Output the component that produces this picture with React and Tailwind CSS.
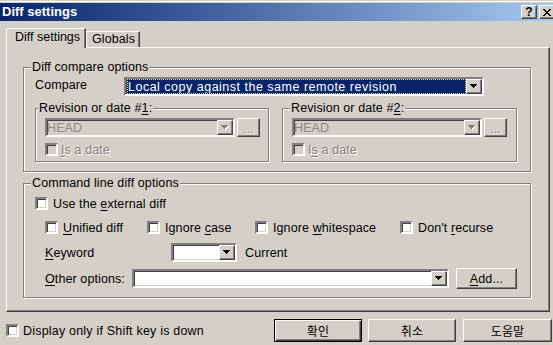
import React from "react";

const sunken =
  "border-2 border-t-[#808080] border-l-[#808080] border-b-white border-r-white shadow-[inset_1px_1px_0_#404040,inset_-1px_-1px_0_#d4d0c8]";
const raised =
  "border border-t-white border-l-white border-r-[#404040] border-b-[#404040] shadow-[inset_-1px_-1px_0_#808080]";
const disabledText = "text-[#808080] [text-shadow:1px_1px_0_#ffffff]";

function U({ children }) {
  return <span className="underline decoration-1 underline-offset-[2px]">{children}</span>;
}

function Arrow({ disabled }) {
  const c = disabled ? "#808080" : "#000000";
  const rows = [0, 1, 2, 3];
  return (
    <svg width="8" height="5" viewBox="0 0 8 5" className="block">
      {disabled &&
        rows.map((i) => (
          <rect key={"s" + i} x={i + 1} y={i + 1} width={7 - 2 * i} height="1" fill="#ffffff" />
        ))}
      {rows.map((i) => (
        <rect key={i} x={i} y={i} width={7 - 2 * i} height="1" fill={c} />
      ))}
    </svg>
  );
}

function XGlyph() {
  const rows = ["11000011", "01100110", "00111100", "00011000", "00111100", "01100110", "11000011"];
  const rects = [];
  rows.forEach((r, y) =>
    r.split("").forEach((ch, x) => {
      if (ch === "1") rects.push(<rect key={x + "-" + y} x={x} y={y} width="1" height="1" fill="#000" />);
    })
  );
  return (
    <svg width="8" height="7" viewBox="0 0 8 7" className="block">
      {rects}
    </svg>
  );
}

function CapBtn({ children }) {
  return (
    <div className={`${raised} bg-[#d4d0c8] w-[16px] h-[14px] flex items-center justify-center`}>{children}</div>
  );
}

function Combo({ className, disabled, children }) {
  return (
    <div className={`${sunken} ${disabled ? "bg-[#d4d0c8]" : "bg-white"} flex ${className}`}>
      <div className="flex-1 min-w-0 flex items-center h-full">{children}</div>
      <div className={`${raised} bg-[#d4d0c8] w-[16px] h-full flex items-center justify-center shrink-0`}>
        <Arrow disabled={disabled} />
      </div>
    </div>
  );
}

function Check({ disabled }) {
  return <div className={`${sunken} w-[13px] h-[13px] shrink-0 ${disabled ? "bg-[#d4d0c8]" : "bg-white"}`} />;
}

function Group({ label, legendClass, className, children }) {
  return (
    <div className={`relative border border-[#808080] shadow-[inset_1px_1px_0_#ffffff,1px_1px_0_#ffffff] ${className}`}>
      <div className={`absolute -top-[8px] ${legendClass} bg-[#d4d0c8] px-[1px] leading-[14px] whitespace-nowrap`}>
        {label}
      </div>
      {children}
    </div>
  );
}

function RevGroup({ label, legendClass, className, second }) {
  return (
    <Group label={label} legendClass={legendClass} className={`h-[54px] pt-[9px] pl-[9px] ${className}`}>
      <div className="flex gap-[2px]">
        <Combo className="w-[190px] h-[19px]" disabled>
          <span className="text-[#8a8a8a] leading-[14px]">HEAD</span>
        </Combo>
        <div className={`${raised} bg-[#d4d0c8] w-[23px] h-[19px] flex items-end justify-center pb-[3px]`}>
          <span className={`${disabledText} text-[11px] leading-[8px]`}>...</span>
        </div>
      </div>
      <div className="mt-[6px] flex items-center gap-[3px] h-[13px]">
        <Check disabled />
        <span className={disabledText}>
          {second ? (
            <>
              I<U>s</U> a date
            </>
          ) : (
            <>
              <U>I</U>s a date
            </>
          )}
        </span>
      </div>
    </Group>
  );
}

function CheckItem({ className, children }) {
  return (
    <div className={`flex items-center gap-[5px] h-[13px] ${className}`}>
      <Check />
      <span className="whitespace-nowrap">{children}</span>
    </div>
  );
}

export default function App() {
  return (
    <div className="w-[553px] h-[345px] overflow-hidden bg-[#d4d0c8] font-['Liberation_Sans',Arial,'Noto_Sans_CJK_KR',sans-serif] text-[12.5px] tracking-[0.1px] text-black leading-[14px] select-none">
      <div className="h-[1px] bg-[#d4d0c8]" />
      <div className="h-[1px] bg-white" />
      <div className="h-[1px] bg-[#d4d0c8]" />
      <div className="h-[18px] flex items-center bg-linear-to-r from-[#0a246a] to-[#a6caf0] pl-[2px]">
        <span className="text-white font-bold text-[13px] tracking-normal leading-[16px]">Diff settings</span>
        <div className="ml-auto mr-[-2px] flex gap-[2px]">
          <CapBtn>
            <span className="font-bold text-[12px] leading-none">?</span>
          </CapBtn>
          <CapBtn>
            <XGlyph />
          </CapBtn>
        </div>
      </div>

      <div className="pt-[7px] pl-[6px] flex items-end h-[26px]">
        <div className="relative z-10 -mb-[1px] h-[20px] w-[80px] bg-[#d4d0c8] border-l border-t border-l-white border-t-white rounded-tl-[2px] border-r border-r-[#404040] shadow-[inset_-1px_0_0_#808080] pl-[8px] pt-[1px] whitespace-nowrap tracking-normal">
          Diff settings
        </div>
        <div className="h-[16px] w-[54px] border-t border-l border-t-white border-l-white border-r border-r-[#404040] shadow-[inset_-1px_0_0_#808080] pl-[5px] whitespace-nowrap">
          Globals
        </div>
      </div>

      <div className="ml-[6px] w-[544px] h-[265px] border border-t-white border-l-white border-r-[#404040] border-b-[#404040] shadow-[inset_-1px_-1px_0_#808080] pl-[16px] pt-[19px] flex flex-col">
        <Group label="Diff compare options" legendClass="left-[7px]" className="w-[508px] h-[105px] pt-[9px] pl-[11px] shrink-0">
          <div className="flex items-start h-[19px]">
            <span className="w-[89px] leading-[14px] pt-[1px]">Compare</span>
            <Combo className="w-[360px] h-[19px]">
              <div className="h-full flex-1 ml-[1px] bg-[#0a246a] border border-dotted border-[#e8d48a] text-white flex items-center whitespace-nowrap overflow-hidden tracking-[0.5px]">
                Local copy against the same remote revision
              </div>
            </Combo>
          </div>
          <div className="mt-[12px] flex gap-[13px]">
            <RevGroup
              label={
                <>
                  Revision or date #<U>1</U>:
                </>
              }
              legendClass="left-[2px]"
              className="w-[234px]"
            />
            <RevGroup
              label={
                <>
                  Revision or date #<U>2</U>:
                </>
              }
              legendClass="left-[7px]"
              className="w-[235px]"
              second
            />
          </div>
        </Group>

        <Group label="Command line diff options" legendClass="left-[7px]" className="mt-[11px] w-[508px] h-[115px] pt-[13px] pl-[11px] shrink-0">
          <CheckItem>
            Use the <U>e</U>xternal diff
          </CheckItem>
          <div className="mt-[11px] pl-[10px] flex">
            <CheckItem className="w-[102px]">
              <U>U</U>nified diff
            </CheckItem>
            <CheckItem className="w-[108px]">
              Ignore <U>c</U>ase
            </CheckItem>
            <CheckItem className="w-[145px]">
              Ignore <U>w</U>hitespace
            </CheckItem>
            <CheckItem>
              Don't <U>r</U>ecurse
            </CheckItem>
          </div>
          <div className="mt-[9px] pl-[10px] flex items-center h-[19px]">
            <span className="w-[126px]">
              <U>K</U>eyword
            </span>
            <Combo className="w-[66px] h-[19px]" />
            <span className="ml-[8px]">Current</span>
          </div>
          <div className="mt-[6px] pl-[10px] flex items-center h-[21px]">
            <span className="w-[87px] whitespace-nowrap">
              <U>O</U>ther options:
            </span>
            <Combo className="w-[317px] h-[19px]" />
            <div className={`${raised} bg-[#d4d0c8] ml-[7px] w-[61px] h-[21px] flex items-center justify-center`}>
              <span>
                <U>A</U>dd...
              </span>
            </div>
          </div>
        </Group>
      </div>

      <div className="mt-[7px] h-[23px] pl-[6px] flex items-center">
        <Check />
        <span className="ml-[4px] whitespace-nowrap tracking-[0.2px]">Display only if Shift key is down</span>
        <div className="ml-auto mr-[1px] flex">
          <div className="w-[88px] h-[23px] border border-black bg-[#d4d0c8] shadow-[inset_1px_1px_0_#ffffff,inset_-1px_-1px_0_#404040,inset_-2px_-2px_0_#808080] flex items-center justify-center text-[12px] font-['Noto_Sans_CJK_KR',sans-serif]">
            확인
          </div>
          <div className={`${raised} ml-[6px] w-[88px] h-[23px] bg-[#d4d0c8] flex items-center justify-center text-[12px] font-['Noto_Sans_CJK_KR',sans-serif]`}>
            취소
          </div>
          <div className={`${raised} ml-[7px] w-[89px] h-[23px] bg-[#d4d0c8] flex items-center justify-center text-[12px] font-['Noto_Sans_CJK_KR',sans-serif]`}>
            도움말
          </div>
        </div>
      </div>
    </div>
  );
}
